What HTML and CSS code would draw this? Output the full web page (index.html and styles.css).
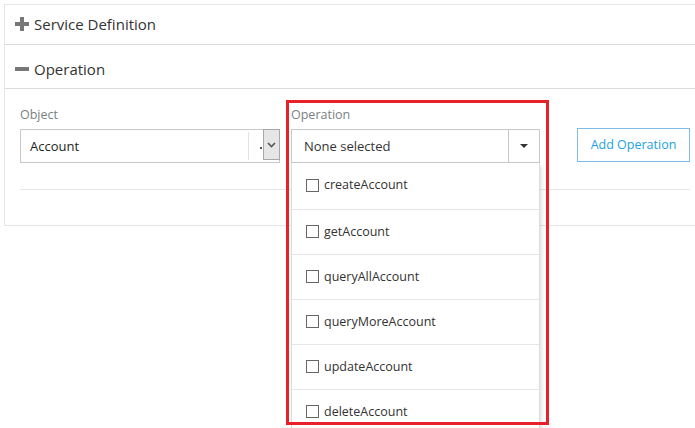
FILE: index.html
```html
<!DOCTYPE html>
<html>
<head>
<meta charset="utf-8">
<link rel="stylesheet" href="styles.css">
</head>
<body>
<div class="page">
  <div class="panel">
    <div class="head head-first">
      <span class="icon-plus"></span><span class="head-title">Service Definition</span>
    </div>
    <div class="head head-second">
      <span class="icon-minus"></span><span class="head-title">Operation</span>
    </div>
    <div class="body">
      <div class="form-row">
        <div class="field field-object">
          <div class="label">Object</div>
          <div class="select-native">
            <span class="select-text">Account</span>
            <span class="select-sep"></span>
            <span class="select-tick"></span>
            <span class="select-btn">
              <svg width="9" height="6" viewBox="0 0 9 6"><path d="M1 1 L4.5 4.5 L8 1" fill="none" stroke="#555" stroke-width="1.6"/></svg>
            </span>
          </div>
        </div>
        <div class="field field-op">
          <div class="label">Operation</div>
          <div class="ms-btn">
            <span class="ms-text">None selected</span>
            <span class="ms-caret-wrap"><span class="ms-caret"></span></span>
          </div>
          <ul class="ms-menu">
            <li class="ms-item"><span class="cb"></span>createAccount</li>
            <li class="ms-item"><span class="cb"></span>getAccount</li>
            <li class="ms-item"><span class="cb"></span>queryAllAccount</li>
            <li class="ms-item"><span class="cb"></span>queryMoreAccount</li>
            <li class="ms-item"><span class="cb"></span>updateAccount</li>
            <li class="ms-item"><span class="cb"></span>deleteAccount</li>
          </ul>
        </div>
        <button class="add-btn">Add Operation</button>
      </div>
      <div class="rule"></div>
    </div>
  </div>
  <div class="highlight"></div>
</div>
</body>
</html>
```
FILE: styles.css
```css
html, body {
  margin: 0;
  padding: 0;
  overflow: hidden;
  background: #fff;
  font-family: "Open Sans", "Noto Sans", sans-serif;
  color: #333;
}
.page {
  position: relative;
  width: 695px;
  height: 428px;
  padding: 4px 0 0 4px;
  box-sizing: border-box;
}
.panel {
  width: 720px;
  border: 1px solid #e6e6e6;
  box-sizing: border-box;
}
.head {
  display: flex;
  align-items: center;
  border-bottom: 1px solid #dcdcdc;
  padding-left: 10px;
  box-sizing: border-box;
}
.head-first { height: 40px; padding-bottom: 2px; }
.head-second { height: 44px; padding-top: 4px; }
.head-title {
  font-size: 15px;
  color: #333;
  margin-left: 5px;
}
.icon-plus, .icon-minus {
  position: relative;
  display: inline-block;
  width: 14px;
  height: 14px;
}
.icon-plus::before, .icon-minus::before {
  content: "";
  position: absolute;
  left: 0;
  top: 5px;
  width: 14px;
  height: 4px;
  background: #777;
}
.icon-plus::after {
  content: "";
  position: absolute;
  left: 5px;
  top: 0;
  width: 4px;
  height: 14px;
  background: #777;
}
.body {
  padding: 17px 0 35px 15px;
}
.form-row {
  display: flex;
  align-items: flex-start;
}
.label {
  font-size: 12.5px;
  line-height: 18px;
  color: #7a7f85;
  margin-bottom: 5px;
}
.field-object { width: 260px; }
.field-op {
  position: relative;
  width: 249px;
  margin-left: 11px;
}
.select-native {
  position: relative;
  display: flex;
  align-items: center;
  height: 34px;
  border: 1px solid #c8c8c8;
  box-sizing: border-box;
}
.select-text {
  font-size: 13px;
  padding-left: 9px;
  color: #222;
  flex: 1;
}
.select-sep {
  width: 1px;
  align-self: stretch;
  margin: 2px 0;
  background: #e2e2e2;
}
.select-tick {
  width: 2px;
  height: 2px;
  background: #555;
  margin: 4px 0 0 11px;
}
.select-btn {
  display: flex;
  align-items: center;
  justify-content: center;
  width: 17px;
  height: 31px;
  margin-left: 1px;
  margin-right: -1px;
  align-self: flex-start;
  margin-top: -1px;
  background: #e6e6e6;
  border: 1px solid #a8a8a8;
  box-sizing: border-box;
}
.ms-btn {
  display: flex;
  height: 34px;
  border: 1px solid #c8c8c8;
  box-sizing: border-box;
  align-items: stretch;
}
.ms-text {
  flex: 1;
  display: flex;
  align-items: center;
  padding-left: 12px;
  font-size: 13px;
  color: #333;
}
.ms-caret-wrap {
  width: 30px;
  border-left: 1px solid #c8c8c8;
  display: flex;
  align-items: center;
  justify-content: center;
}
.ms-caret {
  width: 0;
  height: 0;
  border-left: 4px solid transparent;
  border-right: 4px solid transparent;
  border-top: 4px solid #333;
}
.ms-menu {
  position: absolute;
  left: 0;
  top: 57px;
  width: 249px;
  margin: 0;
  padding: 1px 0 0;
  list-style: none;
  background: #fff;
  border: 1px solid #dcdcdc;
  border-top: none;
  box-sizing: border-box;
  box-shadow: 2px 3px 4px rgba(0,0,0,0.12);
  z-index: 2;
}
.ms-item {
  display: flex;
  align-items: center;
  height: 45px;
  padding: 0 0 2px 14px;
  border-bottom: 1px solid #e6e6e6;
  box-sizing: border-box;
  font-size: 12.5px;
  color: #333;
}
.ms-item:first-child { height: 46px; padding-bottom: 4px; }
.cb {
  width: 13px;
  height: 13px;
  border: 1px solid #666;
  box-sizing: border-box;
  margin-right: 5px;
  margin-top: 1px;
}
.add-btn {
  margin: 22px 0 0 37px;
  width: 113px;
  height: 34px;
  border: 1px solid #7dbbe6;
  background: #fff;
  color: #1ba1e2;
  font-family: inherit;
  font-size: 12.5px;
  padding: 0 0 2px;
}
.rule {
  margin-top: 26px;
  border-top: 1px solid #e6e6e6;
  width: 670px;
}
.highlight {
  position: absolute;
  left: 286px;
  top: 100px;
  width: 263px;
  height: 325px;
  border: 3px solid #e8202a;
  box-sizing: border-box;
  z-index: 3;
  pointer-events: none;
}
```
